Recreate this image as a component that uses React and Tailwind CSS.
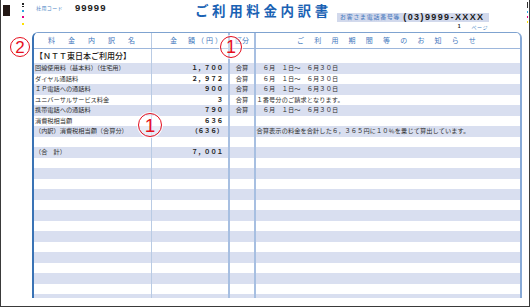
const DATE = '　６月　１日～　６月３０日'

const ROWS = [
  { name: '回線使用料（基本料）（住宅用）', amount: '１，７００', kind: '合算', note: DATE },
  { name: 'ダイヤル通話料', amount: '２，９７２', kind: '合算', note: DATE },
  { name: 'ＩＰ電話への通話料', amount: '９００', kind: '合算', note: DATE },
  { name: 'ユニバーサルサービス料金', amount: '３', kind: '合算', note: '１番号分のご請求となります。' },
  { name: '携帯電話への通話料', amount: '７９０', kind: '合算', note: DATE },
  { name: '消費税相当額', amount: '６３６' },
  { name: '（内訳）消費税相当額（合算分）', amount: '（６３６）', note: '合算表示の料金を合計した６，３６５円に１０％を乗じて算出しています。' },
  {},
  { name: '（合　計）', amount: '７，００１' },
]

const FILL = Array.from({ length: 14 }, () => ({}))

function Circled({ n, className }) {
  return (
    <div className={`absolute rounded-full border-[1.8px] border-[#e60f1e] bg-white/40 shadow-[0_0_0_1px_rgba(255,255,255,0.9)] flex items-center justify-center text-[#e60f1e] font-['Liberation_Sans',sans-serif] leading-none ${className}`}>
      {n}
    </div>
  )
}

function BodyRow({ row, striped }) {
  const bg = striped ? 'bg-[#d9dff0]' : 'bg-white'
  return (
    <div className={`flex h-[10.5px] shrink-0 text-[6.2px] leading-none text-[#2e2e2e] ${bg}`}>
      <div className="w-[118px] shrink-0 border-r border-[#b9cbe4] flex items-center pl-[1px] whitespace-nowrap">{row.name}</div>
      <div className="w-[78px] shrink-0 border-r-2 border-[#a7bfe1] flex items-center justify-end pr-[5px] font-bold text-[6.3px] text-[#222]">{row.amount}</div>
      <div className="w-[26px] shrink-0 border-r-2 border-[#a7bfe1] flex items-center justify-center">{row.kind}</div>
      <div className="flex-1 flex items-center pl-[0.5px] whitespace-nowrap tracking-[0.1px]">{row.note}</div>
    </div>
  )
}

function TopBar() {
  return (
    <div className="flex h-[32px] shrink-0 items-start">
      <div className="w-[33px] shrink-0 flex items-start">
        <div className="ml-[2px] mt-[5px] w-[7px] h-[11px] bg-[#231815]" />
        <div className="ml-[12px] mt-[3px] flex flex-col items-center">
          <div className="w-[1.5px] h-[1.5px] bg-[#222]" />
          <div className="mt-[1px] w-[1.5px] h-[1.5px] bg-[#222]" />
          <div className="mt-[3px] w-[1.5px] h-[2px] bg-[#2aa6e0]" />
          <div className="mt-[4px] w-[1.5px] h-[2px] bg-[#e4007f]" />
          <div className="mt-[5px] w-[1.5px] h-[2px] bg-[#ffe100]" />
        </div>
      </div>
      <div className="w-[41px] shrink-0 pl-[2px] pt-[5px] text-[5px] leading-none tracking-[0.4px] text-[#4d86c6]">社用コード</div>
      <div className="w-[120px] shrink-0 pt-[3px] font-['Liberation_Sans',sans-serif] font-bold text-[9.5px] leading-none tracking-[1px] text-[#1b1b1b]">99999</div>
      <div className="w-[142px] shrink-0 pt-[4px] font-bold text-[13.5px] leading-none tracking-[3.6px] text-[#1a62b4] whitespace-nowrap">ご利用料金内訳書</div>
      <div className="flex flex-col">
        <div className="mt-[12.5px] w-[152px] h-[9px] bg-[#d2d9ec] flex items-center pl-[3px]">
          <span className="text-[5.8px] leading-none tracking-[0.9px] text-[#3d74bb] whitespace-nowrap">お客さま電話番号等</span>
          <span className="ml-[3px] font-['Liberation_Sans',sans-serif] font-bold text-[9px] leading-none tracking-[1.4px] text-[#1b1b1b] whitespace-nowrap">(03)9999-XXXX</span>
        </div>
        <div className="mt-[2px] flex items-center justify-end pr-[1px] text-[5px] leading-none">
          <span className="font-['Liberation_Sans',sans-serif] font-bold text-[#222]">1</span>
          <span className="ml-[11px] tracking-[0.5px] text-[#4d86c6]">ページ</span>
        </div>
      </div>
      <div className="ml-auto mr-[1px] mt-[2px] flex flex-col items-center">
        <div className="w-[1.5px] h-[6px] bg-[#333]" />
        <div className="mt-[3px] w-[1.5px] h-[2px] bg-[#2aa6e0]" />
        <div className="mt-[3px] w-[1.5px] h-[2px] bg-[#e4007f]" />
        <div className="mt-[3px] w-[1.5px] h-[2px] bg-[#ffe100]" />
      </div>
    </div>
  )
}

export default function App() {
  return (
    <div className="relative w-[530px] h-[308px] bg-white overflow-hidden font-['Noto_Sans_CJK_JP','Noto_Sans',sans-serif]">
      <div className="h-[307px] border-x border-b border-[#3a3a3a] flex flex-col">
        <TopBar />

        <div className="ml-[31px] mr-[7px] h-[266px] shrink-0 flex flex-col overflow-hidden rounded-t-[6px] border-t-[1.5px] border-l-2 border-r-2 border-t-[#7fa3d0] border-l-[#3a73b5] border-r-[#87a9d6]">
          {/* header */}
          <div className="flex h-[16px] shrink-0 border-b border-[#9db7dc] text-[7px] leading-none text-[#3f78bd] bg-white">
            <div className="w-[118px] shrink-0 border-r border-[#b9cbe4] flex items-center pl-[14px] tracking-[13px] whitespace-nowrap">料金内訳名</div>
            <div className="w-[78px] shrink-0 border-r-2 border-[#a7bfe1] flex items-center pl-[18px] tracking-[2px] whitespace-nowrap">金　額（円）</div>
            <div className="w-[26px] shrink-0 border-r-2 border-[#a7bfe1] flex items-center justify-center">区分</div>
            <div className="flex-1 flex items-center pl-[41px] tracking-[10.2px] whitespace-nowrap">ご利用期間等のお知らせ</div>
          </div>

          {/* section title */}
          <div className="flex h-[14px] shrink-0 bg-white text-[#231815]">
            <div className="w-[118px] shrink-0 border-r border-[#b9cbe4] flex items-center pl-[1px] text-[8px] leading-none font-medium whitespace-nowrap">【ＮＴＴ東日本ご利用分】</div>
            <div className="w-[78px] shrink-0 border-r-2 border-[#a7bfe1]" />
            <div className="w-[26px] shrink-0 border-r-2 border-[#a7bfe1]" />
            <div className="flex-1" />
          </div>

          {[...ROWS, ...FILL].map((row, i) => (
            <BodyRow key={i} row={row} striped={i % 2 === 0} />
          ))}
        </div>
      </div>

      <Circled n="2" className="left-[10px] top-[37px] w-[20px] h-[20px] text-[17px]" />
      <Circled n="1" className="left-[220px] top-[36px] w-[22px] h-[22px] text-[18px]" />
      <Circled n="1" className="left-[138px] top-[113px] w-[24px] h-[24px] text-[19px]" />
    </div>
  )
}
